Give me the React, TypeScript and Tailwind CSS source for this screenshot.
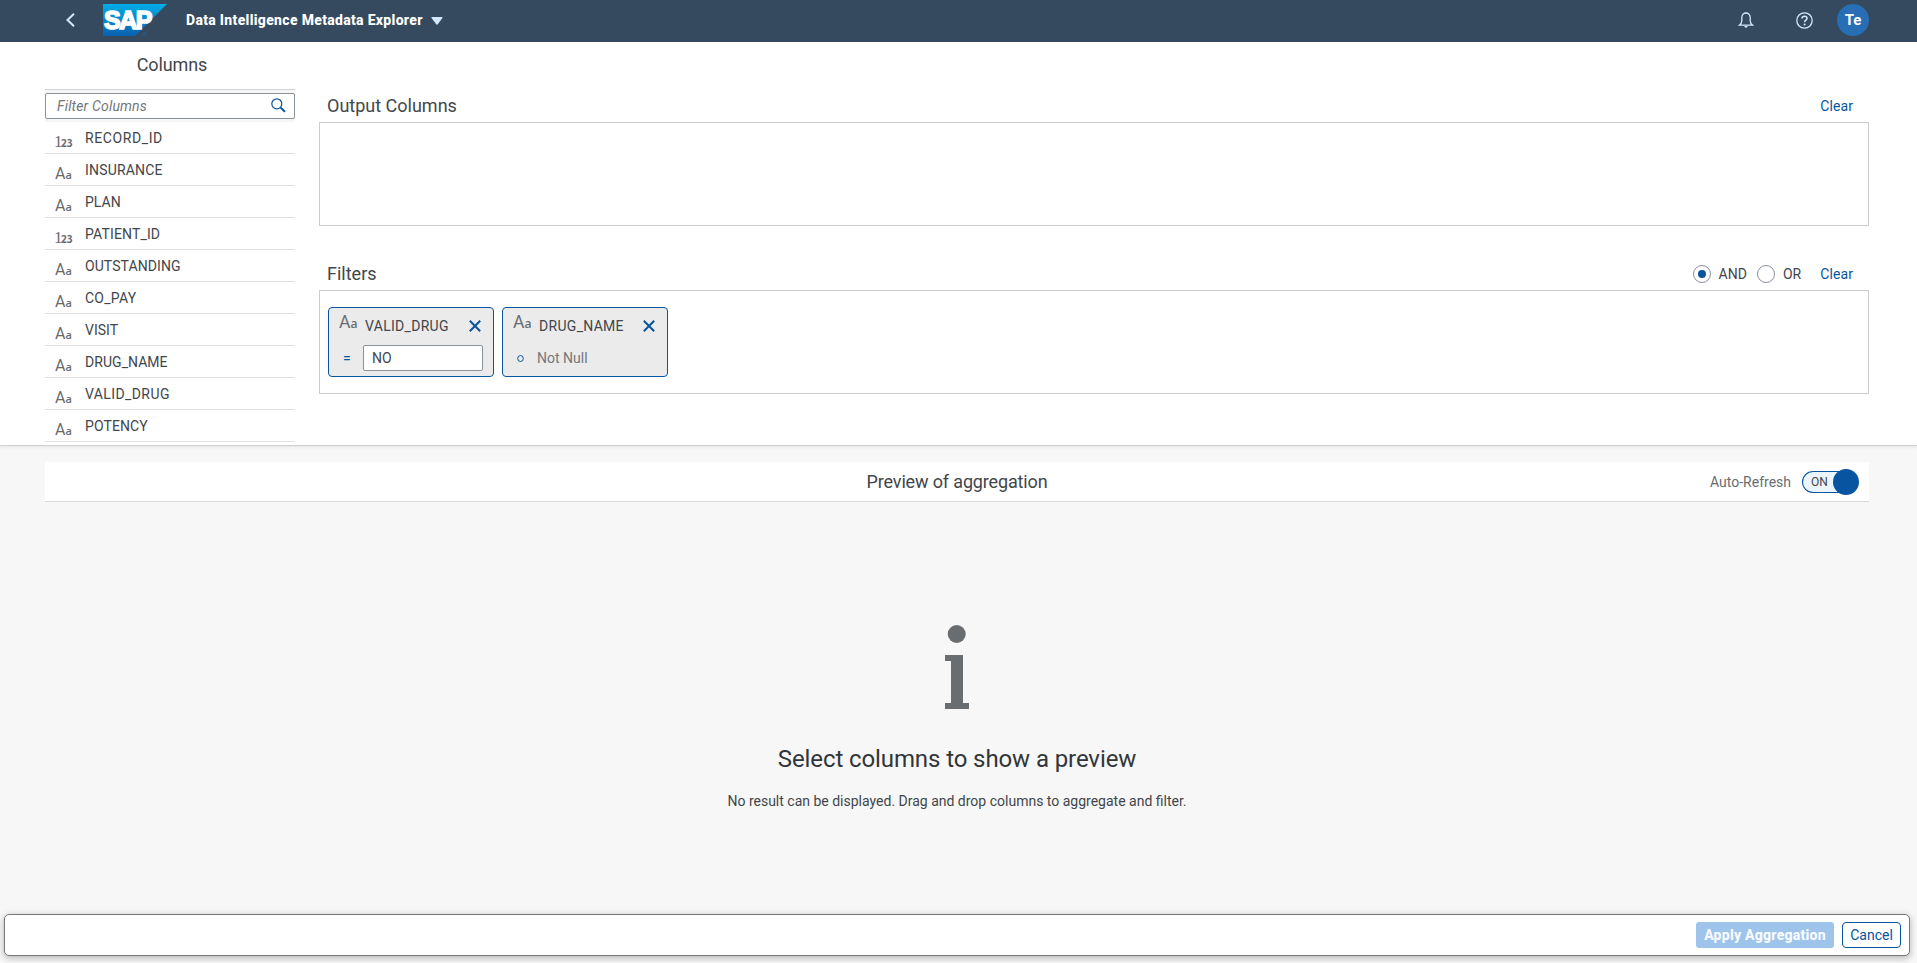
import type { ReactNode } from "react";

type ColumnType = "string" | "number";

const columns: { name: string; type: ColumnType; tracking: string }[] = [
  { name: "RECORD_ID", type: "number", tracking: "tracking-[0.6px]" },
  { name: "INSURANCE", type: "string", tracking: "tracking-[0.18px]" },
  { name: "PLAN", type: "string", tracking: "tracking-normal" },
  { name: "PATIENT_ID", type: "number", tracking: "tracking-[0.15px]" },
  { name: "OUTSTANDING", type: "string", tracking: "tracking-[0.08px]" },
  { name: "CO_PAY", type: "string", tracking: "tracking-[0.25px]" },
  { name: "VISIT", type: "string", tracking: "tracking-normal" },
  { name: "DRUG_NAME", type: "string", tracking: "tracking-[0.05px]" },
  { name: "VALID_DRUG", type: "string", tracking: "tracking-[0.4px]" },
  { name: "POTENCY", type: "string", tracking: "tracking-[0.1px]" },
];

function TypeIcon({ type }: { type: ColumnType }) {
  if (type === "number") {
    return (
      <span className="-ml-px flex items-baseline text-[#6a6d70]">
        <span className="w-[7px] font-['Liberation_Serif',serif] text-[17px] leading-4">1</span>
        <span className="font-['Open_Sans',sans-serif] text-[10px] font-bold leading-4">23</span>
      </span>
    );
  }
  return (
    <span className="flex items-baseline text-[#6a6d70]">
      <span className="text-[16px] leading-4">A</span>
      <span className="font-['Open_Sans',sans-serif] text-[11px] font-semibold leading-4">a</span>
    </span>
  );
}

function SapLogo() {
  return (
    <svg width="64" height="32" viewBox="0 0 64 32" className="ml-[29px]">
      <defs>
        <linearGradient id="sap" x1="0" y1="0" x2="0" y2="1">
          <stop offset="0" stopColor="#00aee6" />
          <stop offset="0.5" stopColor="#0a86cd" />
          <stop offset="1" stopColor="#0961b0" />
        </linearGradient>
      </defs>
      <path d="M0 0H64L32 32H0Z" fill="url(#sap)" />
      <text x="1" y="25.3" fill="#fff" stroke="#fff" strokeWidth="1.7" fontFamily="Liberation Sans, sans-serif" fontWeight="700" fontSize="26" textLength="47" lengthAdjust="spacingAndGlyphs" letterSpacing="-1.5">
        SAP
      </text>
      <circle cx="41.5" cy="30" r="1.5" fill="none" stroke="#1f6297" strokeWidth="1" />
    </svg>
  );
}

function Header() {
  return (
    <header className="flex h-[42px] shrink-0 items-start bg-[#354a5f] pl-[66px] pr-12 pt-1">
      <div className="flex h-8 items-center">
        <svg width="9" height="14" viewBox="0 0 9 14" fill="none" stroke="#d1e8ff" strokeWidth="2">
          <path d="M8 0.7 1.500 7 8 13.300" />
        </svg>
        <div className="-ml-px flex"><SapLogo /></div>
        <span className="ml-[19px] w-[237px] whitespace-nowrap text-sm font-extrabold tracking-[0.32px] text-white">Data Intelligence Metadata Explorer</span>
        <svg width="12" height="8" viewBox="0 0 12 8" className="ml-[8px] mt-0.5" fill="#d1e8ff">
          <path d="M1 0h10q1 0 .4.9L6.8 7.3Q6 8.2 5.2 7.3L.6.9Q0 0 1 0Z" />
        </svg>
      </div>
      <div className="ml-auto flex h-8 items-center">
        <svg width="16" height="16" viewBox="0 0 16 16" fill="none" stroke="#d1e8ff" strokeWidth="1.3">
          <path d="M1.200 13.200c2-1.200 2.600-2 2.600-4.500V5.500C3.800 2.800 5.700 1 8 1s4.200 1.800 4.200 4.500v3.200c0 2.500.6 3.300 2.600 4.500Z" />
          <path d="M6.200 14h3.600Q9.400 15.700 8 15.700T6.200 14Z" fill="#d1e8ff" stroke="none" />
        </svg>
        <svg width="17" height="17" viewBox="0 0 17 17" className="ml-[42px]" fill="none" stroke="#d1e8ff" strokeWidth="1.3">
          <circle cx="8.500" cy="8.500" r="7.700" />
          <path d="M6 6.500C6 4.900 7 4.200 8.500 4.200S11 5 11 6.400C11 8.200 8.600 8.200 8.600 10.300" strokeWidth="1.500" />
          <circle cx="8.600" cy="12.400" r="1" fill="#d1e8ff" stroke="none" />
        </svg>
        <span className="ml-6 flex size-8 items-center justify-center rounded-full bg-[#286eb4] text-[15px] font-bold text-white">Te</span>
      </div>
    </header>
  );
}

function ColumnsPanel() {
  return (
    <aside className="flex w-[250px] shrink-0 flex-col">
      <h2 className="flex h-[47px] items-center justify-center pb-0.5 pl-1 text-lg tracking-[-0.1px]">Columns</h2>
      <div className="h-[33px] border-t border-[#d3d3d3] bg-[#f5f5f5] pt-[3px]">
        <div className="flex h-[26px] items-center justify-between rounded-[2px] border border-[#89919a] bg-white pl-[11px] pr-2">
          <span className="text-sm italic tracking-[0.17px] text-[#74777a]">Filter Columns</span>
          <svg width="15" height="15" viewBox="0 0 15 15" fill="none" stroke="#0854a0" className="-mt-0.5">
            <circle cx="5.800" cy="5.800" r="5" strokeWidth="1.200" />
            <path d="M9.600 9.600 14 13.800" strokeWidth="2" />
          </svg>
        </div>
      </div>
      <ul>
        {columns.map((c) => (
          <li key={c.name} className="flex h-8 items-center border-b border-[#e0e0e0] pl-2.5">
            <span className="w-[30px] pt-[9px]"><TypeIcon type={c.type} /></span>
            <span className={`text-sm ${c.tracking}`}>{c.name}</span>
          </li>
        ))}
      </ul>
    </aside>
  );
}

function SectionBar({ title, children }: { title: string; children: ReactNode }) {
  return (
    <div className="flex h-[33px] items-center justify-between pl-2 pr-4">
      <h2 className="text-lg">{title}</h2>
      <div className="flex items-center pt-px text-sm">{children}</div>
    </div>
  );
}

function Radio({ label, checked }: { label: string; checked?: boolean }) {
  return (
    <>
      <span className="flex size-[18px] items-center justify-center rounded-full border border-[#89919a]">
        {checked && <span className="size-2 rounded-full bg-[#0854a0]" />}
      </span>
      <span className="ml-2">{label}</span>
    </>
  );
}

function FilterCard({ name, children }: { name: string; children: ReactNode }) {
  return (
    <div className="flex h-[70px] w-[166px] flex-col rounded-[4px] border border-[#0854a0] bg-[#ebebeb] px-[10px]">
      <div className="flex h-9 items-center">
        <span className="-mt-[5px] w-[26px] origin-left scale-110"><TypeIcon type="string" /></span>
        <span className="text-sm tracking-[0.3px]">{name}</span>
        <svg width="12" height="12" viewBox="0 0 12 12" className="-mt-px ml-auto mr-0.5" stroke="#0854a0" strokeWidth="2">
          <path d="M.8.8l10.400 10.400M11.200.8.8 11.200" />
        </svg>
      </div>
      <div className="flex h-7 items-center">{children}</div>
    </div>
  );
}

function Workspace() {
  return (
    <main className="min-w-0 flex-1 pt-[47px]">
      <SectionBar title="Output Columns">
        <span className="tracking-[0.1px] text-[#0854a0]">Clear</span>
      </SectionBar>
      <div className="h-[104px] border border-[#ccc]" />
      <div className="pt-[31px]">
        <SectionBar title="Filters">
          <Radio label="AND" checked />
          <span className="w-2.5" />
          <Radio label="OR" />
          <span className="ml-[19px] tracking-[0.1px] text-[#0854a0]">Clear</span>
        </SectionBar>
      </div>
      <div className="flex h-[104px] gap-2 border border-[#ccc] pl-2 pt-4">
        <FilterCard name="VALID_DRUG">
          <span className="w-[24px] pl-1 text-sm text-[#0854a0]">=</span>
          <span className="flex h-[26px] w-[120px] items-center rounded-[2px] border border-[#89919a] bg-white pl-2 text-sm">NO</span>
        </FilterCard>
        <FilterCard name="DRUG_NAME">
          <span className="w-[24px] pl-1">
            <svg width="7" height="8" viewBox="0 0 7 8" fill="none" stroke="#0854a0"><ellipse cx="3.500" cy="4.500" rx="2.800" ry="3" /></svg>
          </span>
          <span className="text-sm text-[#74777a]">Not Null</span>
        </FilterCard>
      </div>
    </main>
  );
}

function Preview() {
  return (
    <section className="flex flex-1 flex-col pl-[45px] pr-12 pt-4">
      <div className="grid h-10 grid-cols-[1fr_auto_1fr] items-center border-b border-[#d9d9d9] bg-white px-2.5">
        <span />
        <h2 className="text-lg tracking-[-0.15px]">Preview of aggregation</h2>
        <div className="flex items-center justify-end">
          <span className="text-sm text-[#6a6d70]">Auto-Refresh</span>
          <div className="ml-[11px] flex h-[26px] w-[57px] items-center">
            <span className="flex h-[22px] w-[44px] items-center rounded-l-full border border-r-0 border-[#0854a0] bg-[#ebf5fe] pl-2 text-xs">ON</span>
            <span className="-ml-[13px] size-[26px] shrink-0 rounded-full bg-[#0854a0]" />
          </div>
        </div>
      </div>
      <div className="flex flex-col items-center pt-[123px]">
        <svg width="26" height="84" viewBox="0 0 26 84" fill="#6a6d70">
          <circle cx="12.700" cy="9" r="9" />
          <path d="M1 30h18v48h6v6H1v-6h6V36H1Z" />
        </svg>
        <h3 className="mt-8 text-2xl leading-9 tracking-[-0.1px] text-[#32363a]">Select columns to show a preview</h3>
        <p className="mt-[14px] text-sm leading-5">No result can be displayed. Drag and drop columns to aggregate and filter.</p>
      </div>
    </section>
  );
}

function Footer() {
  return (
    <footer className="mb-[7px] ml-1 mr-[7px] flex h-[42px] items-center justify-end gap-2 rounded-[5px] border border-[#777] bg-white pr-2 shadow-[0_2px_7px_rgba(0,0,0,0.28)]">
      <button className="h-[26px] w-[138px] whitespace-nowrap rounded-[3px] bg-[#9fc4ec] text-sm font-extrabold tracking-[0.25px] text-[#f8fbff]">Apply Aggregation</button>
      <button className="h-[26px] w-[59px] rounded-[4px] border border-[#0854a0] bg-white text-sm text-[#0854a0]">Cancel</button>
    </footer>
  );
}

export default function App() {
  return (
    <div className="flex h-[963px] w-[1917px] flex-col overflow-hidden bg-[#f7f7f7] font-['Roboto',sans-serif] text-[#42464a]">
      <Header />
      <div className="flex h-[404px] shrink-0 gap-6 overflow-hidden border-b border-[#d0d0d0] bg-white pl-[45px] pr-12 shadow-[0_1px_3px_rgba(0,0,0,0.08)]">
        <ColumnsPanel />
        <Workspace />
      </div>
      <Preview />
      <Footer />
    </div>
  );
}
